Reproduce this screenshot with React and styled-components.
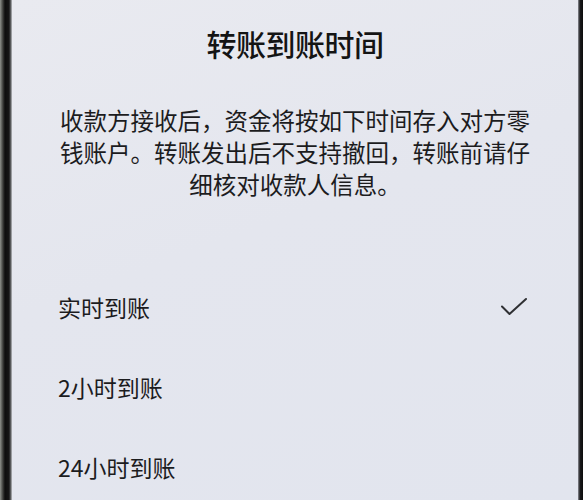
import styled, { createGlobalStyle } from 'styled-components';

const GlobalStyle = createGlobalStyle`
  html, body {
    margin: 0;
    padding: 0;
    height: 100%;
  }
  body {
    font-family: "Noto Sans CJK SC", "Noto Sans", sans-serif;
    background: #e6e8ef;
  }
`;

const OPTIONS = [
  { label: '实时到账', selected: true },
  { label: '2小时到账', selected: false },
  { label: '24小时到账', selected: false },
];

function Check() {
  return (
    <svg width="28" height="20" viewBox="0 0 28 20" fill="none">
      <path
        d="M2 9.5 L9.5 17 L26 2"
        stroke="#2f3033"
        strokeWidth="2"
        strokeLinecap="round"
        strokeLinejoin="round"
      />
    </svg>
  );
}

export default function App() {
  return (
    <>
      <GlobalStyle />
      <Frame>
        <LeftBezel />
        <Screen>
          <Title>转账到账时间</Title>
          <Notice>
            收款方接收后，资金将按如下时间存入对方零钱账户。转账发出后不支持撤回，转账前请仔细核对收款人信息。
          </Notice>
          <OptionList>
            {OPTIONS.map((opt) => (
              <OptionRow key={opt.label}>
                <OptionLabel>{opt.label}</OptionLabel>
                {opt.selected && <Check />}
              </OptionRow>
            ))}
          </OptionList>
        </Screen>
        <RightBezel />
      </Frame>
    </>
  );
}

const Frame = styled.div`
  display: flex;
  width: 583px;
  height: 500px;
  overflow: hidden;
`;

const LeftBezel = styled.div`
  width: 12px;
  flex-shrink: 0;
  background: linear-gradient(
    to right,
    #8f928c 0px,
    #3a3b38 3px,
    #0d0d0d 5px,
    #151515 9px,
    #6c6e70 11px,
    #c9cbd0 12px
  );
`;

const RightBezel = styled.div`
  width: 5px;
  flex-shrink: 0;
  background: linear-gradient(to right, #8d8f96 0px, #1a1a1c 2px, #0c0c0c 5px);
`;

const Screen = styled.div`
  flex: 1;
  display: flex;
  flex-direction: column;
  align-items: center;
  background: linear-gradient(160deg, #e9eaf0 0%, #e4e6ee 45%, #e2e5ee 100%);
  padding-top: 23px;
`;

const Title = styled.h1`
  margin: 0;
  font-size: 30px;
  line-height: 40px;
  font-weight: 500;
  color: #141414;
  letter-spacing: -0.5px;
`;

const Notice = styled.p`
  margin: 41px 0 0;
  width: 470px;
  font-size: 23.5px;
  line-height: 32px;
  text-align: center;
  color: #1c1c1e;
`;

const OptionList = styled.div`
  align-self: stretch;
  display: flex;
  flex-direction: column;
  margin-top: 67px;
  padding: 0 50px 0 46px;
`;

const OptionRow = styled.div`
  display: flex;
  align-items: center;
  justify-content: space-between;
  height: 80px;
`;

const OptionLabel = styled.span`
  font-size: 23px;
  color: #1c1c1e;
`;
